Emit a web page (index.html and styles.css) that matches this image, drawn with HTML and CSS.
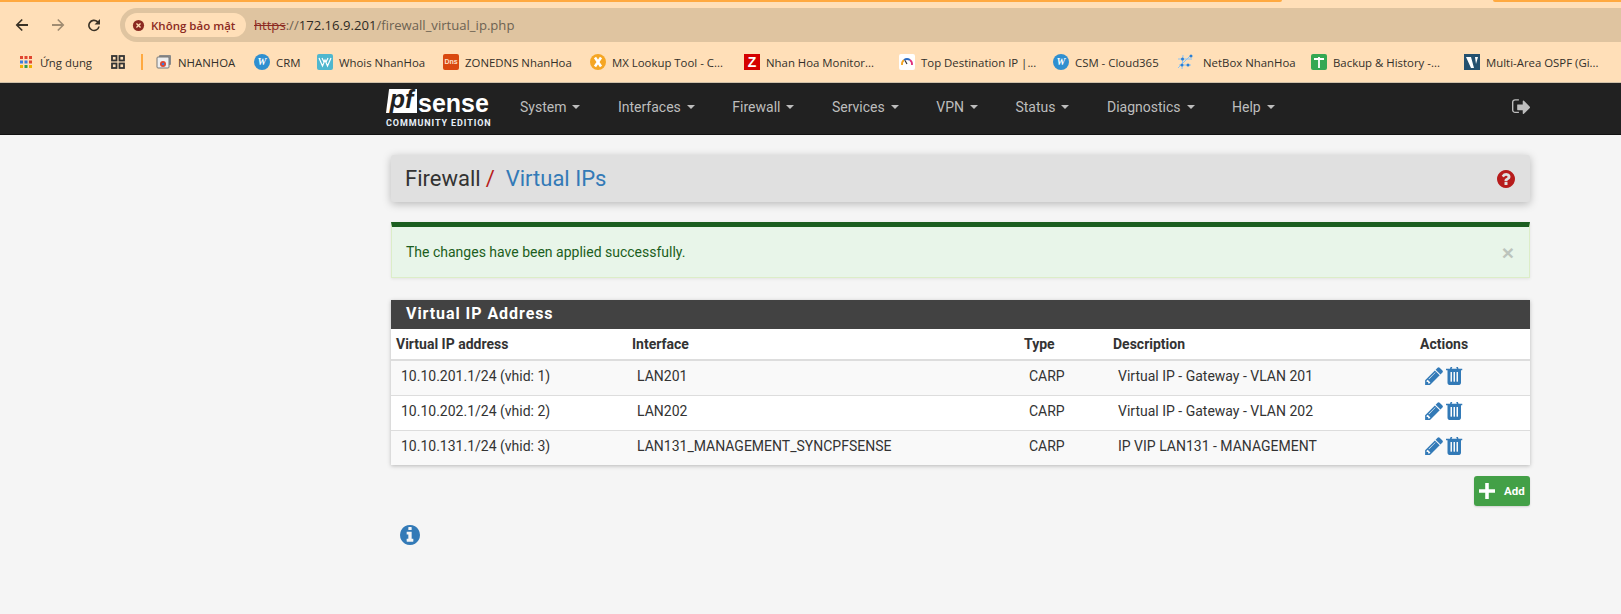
FILE: index.html
```html
<!DOCTYPE html>
<html lang="vi">
<head>
<meta charset="utf-8">
<title>Firewall: Virtual IPs</title>
<link rel="stylesheet" href="styles.css">
</head>
<body>
<svg class="defs" width="0" height="0" aria-hidden="true">
  <symbol id="i-pencil" viewBox="0 0 1515 1536"><path d="M363 1408l91-91-235-235-91 91v107h128v128h107zm523-928q0-22-22-22-10 0-17 7L305 1007q-7 7-7 17 0 22 22 22 10 0 17-7l542-542q7-7 7-17zm-54-192l416 416-832 832H0v-416zm683 96q0 53-37 90l-166 166-416-416 166-165q36-38 90-38 53 0 91 38l235 234q37 39 37 91z"/></symbol>
  <symbol id="i-trash" viewBox="0 128 1408 1408" preserveAspectRatio="none"><path d="M512 1248V544q0-14-9-23t-23-9h-64q-14 0-23 9t-9 23v704q0 14 9 23t23 9h64q14 0 23-9t9-23zm256 0V544q0-14-9-23t-23-9h-64q-14 0-23 9t-9 23v704q0 14 9 23t23 9h64q14 0 23-9t9-23zm256 0V544q0-14-9-23t-23-9h-64q-14 0-23 9t-9 23v704q0 14 9 23t23 9h64q14 0 23-9t9-23zM480 256h448l-48-117q-7-9-17-11H546q-10 2-17 11zm928 32v64q0 14-9 23t-23 9h-96v948q0 83-47 143.500t-113 60.500H288q-66 0-113-58.500T128 1336V384H32q-14 0-23-9t-9-23v-64q0-14 9-23t23-9h309l70-167q15-37 54-63t79-26h320q40 0 79 26t54 63l70 167h309q14 0 23 9t9 23z"/></symbol>
</svg>

<header class="browser">
  <div class="tabstrip"><span class="tab-line tab-left"></span><span class="tab-line tab-right"></span></div>
  <div class="toolbar">
    <svg class="tool" viewBox="0 0 16 16"><path d="M14 7H4.800l4-4L7.600 2 1.600 8l6 6 1.200-1-4-4H14z" fill="#3a3226"/></svg>
    <svg class="tool" viewBox="0 0 16 16"><path d="M2 7h9.200l-4-4 1.200-1 6 6-6 6-1.200-1 4-4H2z" fill="#a08c72"/></svg>
    <svg class="tool" viewBox="0 0 16 16"><path d="M14 2v5.500H8.500l2.300-2.300A4.300 4.300 0 1 0 12.200 9.500h1.600A5.900 5.900 0 1 1 12 4z" fill="#3a3226"/></svg>
    <div class="omnibox">
      <div class="chip">
        <svg class="chip-icon" viewBox="0 0 14 14"><circle cx="7" cy="7" r="6" fill="#8c2a22"/><path d="M4.800 4.800l4.400 4.400M9.200 4.800L4.800 9.200" stroke="#ffdfb8" stroke-width="1.400"/></svg>
        <span>Không bảo mật</span>
      </div>
      <div class="url"><span class="https">https</span><span class="scheme">:</span><span class="scheme">//</span>172.16.9.201<span class="scheme">/firewall_virtual_ip.php</span></div>
    </div>
  </div>
  <nav class="bookmarks">
    <a class="bm bm-apps"><svg class="fav" viewBox="0 0 14 14"><g fill="#e0452f"><rect x="1" y="1" width="3" height="3"/><rect x="5.500" y="1" width="3" height="3"/><rect x="10" y="1" width="3" height="3"/></g><g fill="#3a7de0"><rect x="1" y="5.500" width="3" height="3"/><rect x="5.500" y="5.500" width="3" height="3"/></g><rect x="10" y="5.500" width="3" height="3" fill="#e0452f"/><g fill="#f0b000"><rect x="1" y="10" width="3" height="3"/><rect x="10" y="10" width="3" height="3"/></g><rect x="5.500" y="10" width="3" height="3" fill="#2f9e4f"/></svg><span>Ứng dụng</span></a>
    <a class="bm bm-grid"><svg class="fav" viewBox="0 0 14 14"><g fill="none" stroke="#333" stroke-width="1.800"><rect x="1" y="1" width="4.500" height="4.500"/><rect x="8.500" y="1" width="4.500" height="4.500"/><rect x="1" y="8.500" width="4.500" height="4.500"/><rect x="8.500" y="8.500" width="4.500" height="4.500"/></g></svg></a>
    <span class="sep"></span>
    <a class="bm"><svg class="fav" viewBox="0 0 16 16"><rect x="3" y="1" width="12" height="10" rx="1" fill="#8a8a8a"/><rect x="1" y="3" width="12" height="11" rx="1" fill="#eee" stroke="#777"/><circle cx="7" cy="10" r="3" fill="#e0452f"/><circle cx="7" cy="10" r="1.300" fill="#3a7de0"/></svg><span>NHANHOA</span></a>
    <a class="bm"><span class="fav fav-w">W</span><span>CRM</span></a>
    <a class="bm"><svg class="fav" viewBox="0 0 16 16"><rect width="16" height="16" rx="2" fill="#4fb7cf"/><path d="M2 4l3.500 8L8 6l2.500 6L14 4M5 4l2 4M9 8l2-4" stroke="#fff" fill="none" stroke-width="1.200"/></svg><span>Whois NhanHoa</span></a>
    <a class="bm"><span class="fav fav-dns">Dns</span><span>ZONEDNS NhanHoa</span></a>
    <a class="bm"><svg class="fav" viewBox="0 0 16 16"><circle cx="8" cy="8" r="8" fill="#f5a623"/><path d="M5 3.500l6 9M11 3.500l-6 9" stroke="#fff" stroke-width="2.600"/></svg><span>MX Lookup Tool - C...</span></a>
    <a class="bm"><span class="fav fav-z">Z</span><span>Nhan Hoa Monitor...</span></a>
    <a class="bm"><svg class="fav" viewBox="0 0 16 16"><rect width="16" height="16" rx="2" fill="#fff"/><path d="M3 11a5.500 5.500 0 0 1 2-5" stroke="#f5a623" stroke-width="1.800" fill="none"/><path d="M5 6a5.500 5.500 0 0 1 6 0" stroke="#2b6cc4" stroke-width="1.800" fill="none"/><path d="M11 6a5.500 5.500 0 0 1 2 5" stroke="#e0307a" stroke-width="1.800" fill="none"/><path d="M8 10L6 6.500" stroke="#333" stroke-width="1.200"/></svg><span>Top Destination IP |...</span></a>
    <a class="bm"><span class="fav fav-w">W</span><span>CSM - Cloud365</span></a>
    <a class="bm bm-netbox"><svg class="fav" viewBox="0 0 16 16"><path d="M6 1L5 15M14 1L1 14M1 5h14M2 11h12" stroke="#8cc4f4" stroke-width="1" fill="none"/><g fill="#2b7fd4"><circle cx="14" cy="2" r="1.500"/><circle cx="11" cy="11" r="1.500"/><circle cx="5" cy="11" r="1.500"/><circle cx="5.500" cy="5" r="1.500"/></g></svg><span>NetBox NhanHoa</span></a>
    <a class="bm"><svg class="fav" viewBox="0 0 16 16"><rect width="16" height="16" rx="2" fill="#34a853"/><path d="M3 5h10M8 3v11" stroke="#fff" stroke-width="1.800"/></svg><span>Backup &amp; History -...</span></a>
    <a class="bm"><svg class="fav" viewBox="0 0 16 16"><rect width="16" height="16" fill="#24506e"/><path d="M2 3h5l3 11H7zM11 3h3l-2 7z" fill="#fff"/></svg><span>Multi-Area OSPF (Gi...</span></a>
  </nav>
</header>

<div class="topnav">
  <div class="brand">
    <div class="brand-top"><span class="brand-pf">pf</span><span class="brand-sense">sense</span></div>
    <div class="brand-sub">COMMUNITY EDITION</div>
  </div>
  <ul class="menu">
    <li>System<i class="caret"></i></li>
    <li>Interfaces<i class="caret"></i></li>
    <li>Firewall<i class="caret"></i></li>
    <li>Services<i class="caret"></i></li>
    <li>VPN<i class="caret"></i></li>
    <li>Status<i class="caret"></i></li>
    <li>Diagnostics<i class="caret"></i></li>
    <li>Help<i class="caret"></i></li>
  </ul>
  <svg class="logout" viewBox="0 128 1664 1536"><path d="M640 1312q0 4 1 20t.5 26.500-3 23.500-10 19.500-20.500 6.500H288q-119 0-203.500-84.500T0 1120V416q0-119 84.500-203.500T288 128h320q13 0 22.500 9.500T640 160q0 4 1 20t.5 26.500-3 23.500-10 19.500-20.500 6.500H288q-66 0-113 47t-47 113v704q0 66 47 113t113 47h312l11.500 1 11.500 3 8 5.500 7 9 2 13.500zm1024-416q0 26-19 45l-544 544q-19 19-45 19t-45-19-19-45v-288H544q-26 0-45-19t-19-45V672q0-26 19-45t45-19h448V320q0-26 19-45t45-19 45 19l544 544q19 19 19 45z"/></svg>
</div>

<main class="page">
  <div class="crumbs">
    <h1 class="crumb-title">Firewall<span class="crumb-slash">/</span><a class="crumb-link">Virtual IPs</a></h1>
    <svg class="help" viewBox="0 128 1536 1536"><path d="M896 1376v-192q0-14-9-23t-23-9H672q-14 0-23 9t-9 23v192q0 14 9 23t23 9h192q14 0 23-9t9-23zm256-672q0-88-55.500-163T958 425t-170-41q-243 0-371 213-15 24 8 42l132 100q7 6 19 6 16 0 25-12 53-68 86-92 34-24 86-24 48 0 85.500 26t37.500 59q0 38-20 61t-68 45q-63 28-115.500 86.500T640 1019v36q0 14 9 23t23 9h192q14 0 23-9t9-23q0-19 21.500-49.500T972 957q32-18 49-28.500t46-35 44.500-48T1139 775t13-71zm384 192q0 209-103 385.500T1153.500 1561 768 1664t-385.500-103T103 1281.500 0 896t103-385.500T382.500 231 768 128t385.500 103T1433 510.500 1536 896z"/></svg>
  </div>

  <div class="alert">
    <span>The changes have been applied successfully.</span>
    <span class="alert-close">×</span>
  </div>

  <section class="panel">
    <h2 class="panel-title">Virtual IP Address</h2>
    <table class="vip">
      <colgroup><col class="c1"><col class="c2"><col class="c3"><col class="c4"><col class="c5"></colgroup>
      <thead>
        <tr><th>Virtual IP address</th><th>Interface</th><th>Type</th><th>Description</th><th>Actions</th></tr>
      </thead>
      <tbody>
        <tr>
          <td>10.10.201.1/24 (vhid: 1)</td><td>LAN201</td><td>CARP</td><td>Virtual IP - Gateway - VLAN 201</td>
          <td><span class="acts"><svg class="a-pencil"><use href="#i-pencil"/></svg><svg class="a-trash"><use href="#i-trash"/></svg></span></td>
        </tr>
        <tr>
          <td>10.10.202.1/24 (vhid: 2)</td><td>LAN202</td><td>CARP</td><td>Virtual IP - Gateway - VLAN 202</td>
          <td><span class="acts"><svg class="a-pencil"><use href="#i-pencil"/></svg><svg class="a-trash"><use href="#i-trash"/></svg></span></td>
        </tr>
        <tr>
          <td>10.10.131.1/24 (vhid: 3)</td><td>LAN131_MANAGEMENT_SYNCPFSENSE</td><td>CARP</td><td>IP VIP LAN131 - MANAGEMENT</td>
          <td><span class="acts"><svg class="a-pencil"><use href="#i-pencil"/></svg><svg class="a-trash"><use href="#i-trash"/></svg></span></td>
        </tr>
      </tbody>
    </table>
  </section>

  <div class="actions">
    <a class="btn-add"><svg class="plus" viewBox="0 0 18 18"><path d="M7 0h4v7h7v4h-7v7H7v-7H0V7h7z"/></svg><span>Add</span></a>
  </div>

  <svg class="info" viewBox="0 128 1536 1536"><path d="M1024 1376v-160q0-14-9-23t-23-9h-96V672q0-14-9-23t-23-9H544q-14 0-23 9t-9 23v160q0 14 9 23t23 9h96v320h-96q-14 0-23 9t-9 23v160q0 14 9 23t23 9h448q14 0 23-9t9-23zM896 480V320q0-14-9-23t-23-9H672q-14 0-23 9t-9 23v160q0 14 9 23t23 9h192q14 0 23-9t9-23zm640 416q0 209-103 385.500T1153.500 1561 768 1664t-385.500-103T103 1281.500 0 896t103-385.500T382.500 231 768 128t385.500 103T1433 510.500 1536 896z"/></svg>
</main>
</body>
</html>
```

FILE: styles.css
```css
* { box-sizing: border-box; }
html, body { margin: 0; padding: 0; }
body {
  width: 1621px;
  height: 614px;
  overflow: hidden;
  background: #f5f5f5;
  font-family: Roboto, "Liberation Sans", sans-serif;
  font-size: 14px;
  color: #333;
}
.defs { display: block; height: 0; }

/* Browser chrome */
.browser { background: #ffdfb8; height: 83px; border-bottom: 1px solid #cfc0a8; font-family: "Open Sans", "Noto Sans", sans-serif; }
.tabstrip { height: 8px; display: flex; justify-content: space-between; background: #ffdfb8; }
.tab-line { display: block; height: 2px; background: #ffa940; }
.tab-left { width: 1282px; border-radius: 0 0 3px 0; }
.tab-right { width: 128px; border-radius: 0 0 0 3px; }
.toolbar { height: 34px; display: flex; align-items: center; }
.tool { width: 16px; height: 16px; flex: none; margin-right: 20px; }
.tool:first-child { margin-left: 14px; }
.tool:nth-child(3) { margin-right: 18px; }
.omnibox {
  flex: 1;
  height: 34px;
  background: #dfc4a0;
  border-radius: 17px 0 0 17px;
  display: flex;
  align-items: center;
  padding-left: 5px;
}
.chip {
  height: 24px;
  width: 121px;
  background: #ffdfb8;
  border-radius: 12px;
  display: flex;
  align-items: center;
  padding-left: 7px;
  gap: 6px;
  color: #8c2a22;
  font-size: 11.500px;
  font-weight: 600;
  white-space: nowrap;
}
.chip-icon { width: 13px; height: 13px; flex: none; }
.url { margin-left: 8px; font-size: 13.100px; color: #2e2a24; white-space: nowrap; }
.scheme { color: #6d6252; }
.https { color: #8c2a22; text-decoration: line-through; }

.bookmarks {
  height: 40px;
  display: grid;
  grid-template-columns: 92px 30px 15px 98px 63px 126px 147px 154px 155px 154px 124px 134px 153px 1fr;
  align-items: center;
  padding-left: 19px;
  font-size: 11.400px;
  color: #33302a;
}
.bm { display: flex; align-items: center; gap: 6px; white-space: nowrap; }
.fav { width: 16px; height: 16px; flex: none; display: block; }
.bm-apps { gap: 7px; }
.bm-apps .fav, .bm-grid .fav { width: 14px; height: 14px; }
.bm-netbox { gap: 10px; }
.sep { width: 2px; height: 16px; background: #ffa940; }
.fav-w {
  border-radius: 50%;
  background: #2f8fd0;
  color: #fff;
  font: italic 700 10px/16px "Liberation Serif", serif;
  text-align: center;
}
.fav-dns {
  border-radius: 2px;
  background: #d9480f;
  color: #fde0c8;
  font: 700 7px/16px "Liberation Sans", sans-serif;
  text-align: center;
}
.fav-z {
  background: #d50000;
  color: #fff;
  font: 700 14px/16px "Liberation Sans", sans-serif;
  text-align: center;
}

/* pfSense nav */
.topnav {
  height: 52px;
  background: #212121;
  border-bottom: 1px solid #111;
  display: flex;
  padding-left: 386px;
  position: relative;
}
.brand { width: 119px; flex: none; color: #fff; padding-top: 6px; }
.brand-top { display: flex; align-items: flex-end; height: 24px; }
.brand-pf {
  width: 31px;
  height: 24px;
  background: #fff;
  color: #212121;
  font: italic 700 25px/21px "Liberation Sans", sans-serif;
  text-align: center;
  clip-path: polygon(10% 0, 100% 0, 100% 100%, 0 100%);
  letter-spacing: 0;
}
.brand-sense {
  font: 700 25px/20px "Liberation Sans", sans-serif;
  margin-left: 1px;
}
.brand-sub {
  font: 700 9px/10px Roboto, sans-serif;
  letter-spacing: 0.900px;
  margin-top: 5px;
  white-space: nowrap;
  color: #e8f0f8;
}
.menu {
  list-style: none;
  margin: 0 0 0 15px;
  padding: 0;
  display: flex;
  align-items: center;
  height: 47px;
  color: #bdbdbd;
  font-size: 14px;
}
.menu li { display: flex; align-items: center; margin-right: 37.500px; white-space: nowrap; }
.caret {
  display: inline-block;
  margin-left: 6px;
  border-top: 4px solid #bdbdbd;
  border-left: 4px solid transparent;
  border-right: 4px solid transparent;
}
.logout {
  position: absolute;
  left: 1512px;
  top: 16px;
  width: 18px;
  height: 17px;
  fill: #bdbdbd;
}

/* Page */
.page { width: 1139px; margin-left: 391px; padding-top: 20px; }
.crumbs {
  height: 47px;
  background: #e0e0e0;
  border-radius: 3px;
  box-shadow: 0 2px 8px rgba(0,0,0,.25);
  display: flex;
  align-items: center;
  justify-content: space-between;
  padding: 0 15px 0 14px;
}
.crumb-title { margin: 0; font-size: 22px; font-weight: 400; color: #333; white-space: nowrap; }
.crumb-slash { color: #b71c1c; margin: 0 11px 0 5px; }
.crumb-link { color: #337ab7; }
.help { width: 18px; height: 18px; fill: #b71c1c; }

.alert {
  margin-top: 20px;
  height: 56px;
  background: #e8f5e9;
  border-top: 5px solid #1b5e20;
  border-bottom: 1px solid #dcedc8;
  border-right: 1px solid #dcedc8;
  border-left: 1px solid #dcedc8;
  display: flex;
  align-items: center;
  justify-content: space-between;
  padding: 0 15px 0 14px;
  color: #1b5e20;
  font-size: 14px;
  box-shadow: 0 1px 3px rgba(0,0,0,.08);
}
.alert-close { color: #bcc4bc; font: 700 21px/21px "Liberation Sans", sans-serif; }

.panel {
  margin-top: 22px;
  background: #fff;
  box-shadow: 0 1px 4px rgba(0,0,0,.25);
}
.panel-title {
  margin: 0;
  height: 29px;
  padding: 0 15px;
  background: #424242;
  color: #fff;
  font-size: 16px;
  font-weight: 700;
  line-height: 28px;
  letter-spacing: .94px;
}
.vip { width: 100%; border-collapse: collapse; table-layout: fixed; }
.c1 { width: 236px; } .c2 { width: 392px; } .c3 { width: 89px; } .c4 { width: 307px; } .c5 { width: 115px; }
.vip th {
  height: 31px;
  padding: 0 5px;
  text-align: left;
  font-weight: 700;
  font-size: 14px;
  color: #333;
  border-bottom: 2px solid #ddd;
}
.vip td {
  height: 35px;
  padding: 0 10px 3px;
  color: #333;
  border-bottom: 1px solid #ddd;
  white-space: nowrap;
}
.vip tbody tr:nth-child(odd) { background: #f9f9f9; }
.vip tbody tr:last-child td { border-bottom: 0; }
.acts { display: flex; align-items: center; gap: 3px; }
.a-pencil { width: 18px; height: 18px; fill: #337ab7; }
.a-trash { width: 16.500px; height: 18px; fill: #337ab7; }

.actions { display: flex; justify-content: flex-end; margin-top: 11px; }
.btn-add {
  width: 56px;
  height: 30px;
  background: #43a047;
  border-radius: 3px;
  display: flex;
  align-items: center;
  color: #fff;
  font-size: 11.500px;
  font-weight: 700;
  padding-left: 5px;
  gap: 9px;
  box-shadow: 0 1px 2px rgba(0,0,0,.15);
}
.plus { width: 16px; height: 16px; fill: #fff; }
.info { display: block; width: 20px; height: 20px; fill: #337ab7; margin: 19px 0 0 9px; }
```
